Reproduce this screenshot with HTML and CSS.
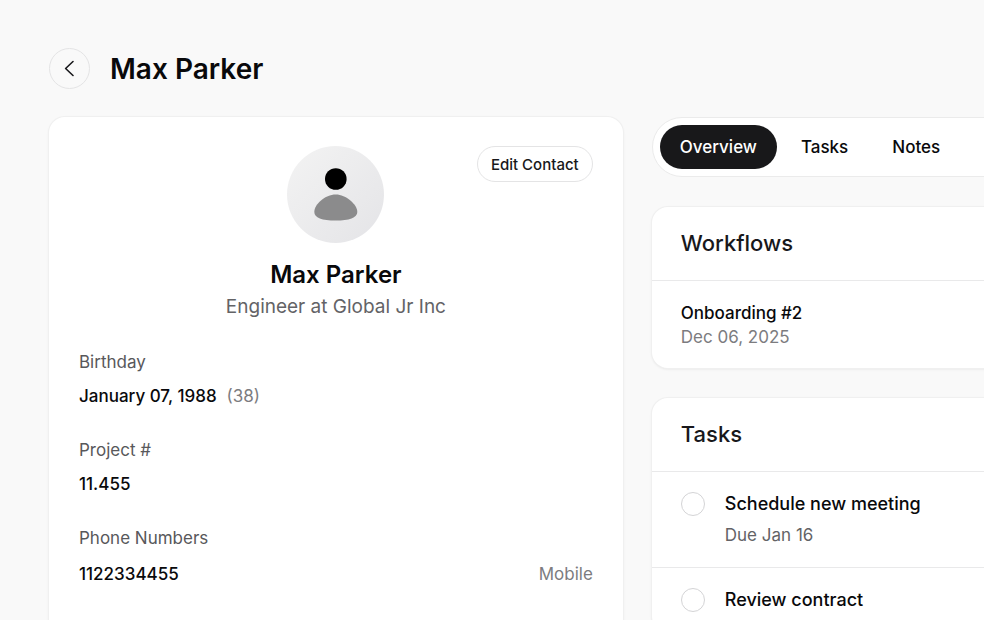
FILE: index.html
```
<!DOCTYPE html>
<html lang="en">
<head>
<meta charset="UTF-8">
<meta name="viewport" content="width=device-width, initial-scale=1">
<title>Max Parker</title>
<link rel="stylesheet" href="styles.css">
</head>
<body>
<div class="page">
  <header class="head">
    <button type="button" class="back" aria-label="Back">
      <svg width="20" height="20" viewBox="0 0 20 20" fill="none" stroke="currentColor" stroke-width="1.6" stroke-linecap="round" stroke-linejoin="round">
        <path d="M13 2.5 L5.6 9.5 L13 16.500"/>
      </svg>
    </button>
    <h1>Max Parker</h1>
  </header>

  <main class="columns">
    <section class="card contact">
      <button type="button" class="edit">Edit Contact</button>
      <div class="profile">
        <svg class="avatar" viewBox="0 0 97 97" aria-hidden="true">
          <defs>
            <linearGradient id="avatarBg" x1="0" y1="0" x2="1" y2="1">
              <stop offset="0" stop-color="#f3f3f3"/>
              <stop offset="1" stop-color="#e4e4e7"/>
            </linearGradient>
          </defs>
          <circle cx="48.500" cy="48.500" r="48.500" fill="url(#avatarBg)"/>
          <circle cx="48.800" cy="33" r="10.800" fill="#000"/>
          <path d="M48.800 48.500 C59 48.500 70.300 58.500 70.300 66 C70.300 72 62 74.600 48.800 74.600 C35 74.600 27.300 72 27.300 66 C27.300 58.500 38 48.500 48.800 48.500 Z" fill="#8b8b8c"/>
        </svg>
        <h2>Max Parker</h2>
        <p>Engineer at Global Jr Inc</p>
      </div>
      <dl class="details">
        <div class="field">
          <dt>Birthday</dt>
          <dd><span>January 07, 1988</span><span class="age">(38)</span></dd>
        </div>
        <div class="field">
          <dt>Project #</dt>
          <dd>11.455</dd>
        </div>
        <div class="field phones">
          <dt>Phone Numbers</dt>
          <dd><span>1122334455</span><span class="kind">Mobile</span></dd>
        </div>
      </dl>
    </section>

    <div class="side">
      <nav class="tabs">
        <a href="#overview" class="active">Overview</a>
        <a href="#tasks">Tasks</a>
        <a href="#notes">Notes</a>
        <a href="#files">Files</a>
      </nav>

      <section class="card">
        <h3>Workflows</h3>
        <div class="row workflow">
          <strong>Onboarding #2</strong>
          <span>Dec 06, 2025</span>
        </div>
      </section>

      <section class="card">
        <h3>Tasks</h3>
        <div class="row task">
          <input type="checkbox" id="task1">
          <label for="task1">Schedule new meeting</label>
          <span>Due Jan 16</span>
        </div>
        <div class="row task">
          <input type="checkbox" id="task2">
          <label for="task2">Review contract</label>
        </div>
      </section>
    </div>
  </main>
</div>
</body>
</html>
```
FILE: styles.css
```
* {
  margin: 0;
  padding: 0;
  box-sizing: border-box;
}
body {
  height: 100vh;
  overflow: hidden;
  background: #f9f9f9;
  color: #09090b;
  font-family: Inter, "Liberation Sans", sans-serif;
  font-size: 17px;
  line-height: 24px;
}
button {
  font-family: inherit;
  cursor: pointer;
}

.page {
  padding: 48px 0 0 49px;
}
.head {
  display: flex;
  align-items: center;
  gap: 20px;
  margin-bottom: 28px;
}
.head h1 {
  font-size: 28px;
  line-height: 40px;
  font-weight: 600;
}
.back {
  display: flex;
  align-items: center;
  justify-content: center;
  width: 41px;
  height: 41px;
  border: 1px solid #e4e4e5;
  border-radius: 50%;
  background: #f9f9f9;
  color: #18181b;
}

.columns {
  display: grid;
  grid-template-columns: 19fr 11fr;
  gap: 29px;
}
.card {
  background: #fff;
  border-radius: 16px;
  box-shadow: 0 0 0 1px #f0f0f0, 0 1px 3px rgba(0, 0, 0, 0.1);
}

/* contact card */
.contact {
  position: relative;
  padding: 29px 30px 60px;
}
.edit {
  position: absolute;
  top: 29px;
  right: 30px;
  width: 116px;
  height: 36px;
  border: 1px solid #e4e4e5;
  border-radius: 18px;
  background: #fff;
  color: #18181b;
  font-size: 15px;
  font-weight: 500;
}
.profile {
  display: flex;
  flex-direction: column;
  align-items: center;
}
.avatar {
  width: 97px;
  height: 97px;
}
.profile h2 {
  margin-top: 16px;
  font-size: 24px;
  line-height: 32px;
  font-weight: 600;
}
.profile p {
  margin-top: 4px;
  color: #636366;
  font-size: 19px;
}
.details {
  display: flex;
  flex-direction: column;
  gap: 30px;
  margin-top: 31px;
}
.field {
  display: flex;
  flex-direction: column;
  gap: 10px;
}
.field dt {
  color: #58585b;
}
.field dd {
  display: flex;
  gap: 10px;
  font-weight: 500;
}
.field .age,
.field .kind {
  color: #7c7c7f;
  font-weight: 400;
}
.phones {
  gap: 12px;
}
.phones dd {
  justify-content: space-between;
}

/* right side, runs on past the window edge */
.side {
  display: flex;
  flex-direction: column;
  gap: 30px;
  min-width: 0;
}
.side > * {
  min-width: 640px;
}
.tabs {
  display: flex;
  gap: 4px;
  padding: 7px;
  border: 1px solid #ebebeb;
  border-radius: 30px;
  background: #fff;
}
.tabs a {
  padding: 10px 20px;
  border-radius: 22px;
  color: #09090b;
  font-weight: 500;
  text-decoration: none;
}
.tabs .active {
  background: #18181a;
  color: #fff;
}
.side h3 {
  padding: 20px 29px 21px;
  font-size: 22px;
  line-height: 32px;
  font-weight: 500;
  color: #18181b;
}
.row {
  padding: 20px 29px;
  border-top: 1px solid #e9e9ea;
}
.workflow {
  display: flex;
  flex-direction: column;
  padding-bottom: 19px;
}
.workflow strong {
  font-weight: 500;
}
.workflow span {
  color: #7c7c7f;
}
.task {
  display: grid;
  grid-template-columns: 24px 1fr;
  gap: 7px 20px;
  align-items: center;
}
.task input {
  appearance: none;
  width: 24px;
  height: 24px;
  border: 1px solid #d4d4d6;
  border-radius: 50%;
  background: #fff;
}
.task input:checked {
  background: #18181b;
}
.task label {
  font-size: 18px;
  font-weight: 500;
}
.task span {
  grid-column: 2;
  color: #636366;
}
```
